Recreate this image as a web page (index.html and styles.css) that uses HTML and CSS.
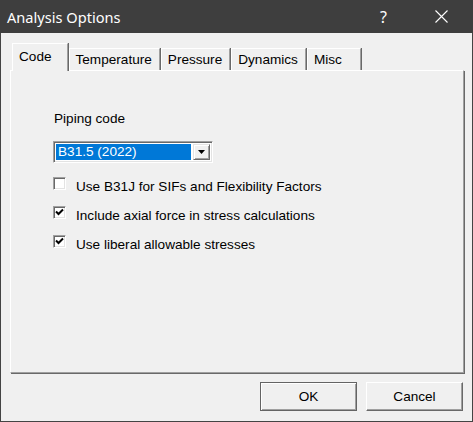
FILE: index.html
```html
<!DOCTYPE html>
<html lang="en">
<head>
  <meta charset="UTF-8" />
  <title>Analysis Options</title>
  <link rel="stylesheet" href="styles.css">
</head>
<body>
  <div class="dialog">
    <div class="titlebar">
      <span class="title">Analysis Options</span>
      <span class="help">?</span>
      <span class="close">
        <svg width="13" height="13" viewBox="0 0 13 13"><path d="M0.5 0.5 L12.5 12.5 M12.5 0.5 L0.5 12.5" stroke="#fff" stroke-width="1.1" fill="none"/></svg>
      </span>
    </div>

    <div class="client">
      <div class="tabs">
        <div class="tab active">Code</div>
        <div class="tab">Temperature</div>
        <div class="tab">Pressure</div>
        <div class="tab">Dynamics</div>
        <div class="tab tab-last">Misc</div>
      </div>

      <div class="panel">
        <div class="field-label">Piping code</div>
        <div class="combo">
          <div class="combo-value"><span class="combo-sel">B31.5 (2022)</span></div>
          <div class="combo-btn">
            <svg width="7" height="4" viewBox="0 0 7 4"><path d="M0 0 H7 L3.5 4 Z" fill="#000"/></svg>
          </div>
        </div>

        <div class="check">
          <span class="box"></span>
          <span class="check-text">Use B31J for SIFs and Flexibility Factors</span>
        </div>
        <div class="check">
          <span class="box"><svg width="9" height="9" viewBox="0 0 9 9"><path d="M1 3.5 L3.5 6 L8 1.5" stroke="#000" stroke-width="2" fill="none"/></svg></span>
          <span class="check-text">Include axial force in stress calculations</span>
        </div>
        <div class="check">
          <span class="box"><svg width="9" height="9" viewBox="0 0 9 9"><path d="M1 3.5 L3.5 6 L8 1.5" stroke="#000" stroke-width="2" fill="none"/></svg></span>
          <span class="check-text">Use liberal allowable stresses</span>
        </div>
      </div>

      <div class="buttons">
        <button class="btn btn-default">OK</button>
        <button class="btn">Cancel</button>
      </div>
    </div>
  </div>
</body>
</html>
```

FILE: styles.css
```css
body {
  margin: 0;
  background: #f0f0f0;
  font-family: "Liberation Sans", Arial, sans-serif;
  font-size: 13.6px;
  color: #000;
}
.dialog {
  width: 473px;
  height: 422px;
  box-sizing: border-box;
  background: #f0f0f0;
  border: 1px solid #444;
  border-top: none;
}
.titlebar {
  height: 33px;
  margin: 0 -1px;
  background: #3e3e3e;
  color: #fff;
  display: flex;
  align-items: center;
  padding-left: 7px;
  font-family: "Noto Sans", "Open Sans", sans-serif;
  font-size: 14.6px;
}
.title {
  flex: 1;
}
.help {
  width: 20px;
  margin-right: 35px;
  font-size: 16px;
}
.close {
  width: 13px;
  margin-right: 25px;
  display: flex;
}
.client {
  padding: 10px 8px 0 9px;
}
.tabs {
  display: flex;
  align-items: flex-end;
  height: 27px;
  padding-left: 2px;
}
.tab {
  height: 22px;
  box-sizing: border-box;
  padding: 3px 7px 0 6px;
  border-left: 1px solid #fff;
  border-top: 1px solid #fff;
  border-right: 1px solid #a0a0a0;
  box-shadow: 1px 0 0 #696969;
  margin-right: 1px;
  white-space: nowrap;
}
.tab.active {
  height: 28px;
  margin-bottom: -1px;
  padding: 5px 15px 0 6px;
  background: #f0f0f0;
  position: relative;
  z-index: 1;
}
.tab-last {
  padding-right: 18px;
}
.panel {
  height: 303px;
  box-sizing: border-box;
  padding: 40px 0 0 43px;
  border-top: 1px solid #fff;
  border-left: 1px solid #fff;
  border-right: 1px solid #a0a0a0;
  border-bottom: 1px solid #a0a0a0;
  box-shadow: 1px 1px 0 #696969;
}
.field-label {
  line-height: 16px;
}
.combo {
  display: flex;
  width: 160px;
  height: 22px;
  box-sizing: border-box;
  margin: 14px 0 7px -1px;
  border-top: 1px solid #a0a0a0;
  border-left: 1px solid #a0a0a0;
  border-right: 1px solid #fff;
  border-bottom: 1px solid #fff;
  box-shadow: inset 1px 1px 0 #696969, inset -1px -1px 0 #e3e3e3;
  background: #fff;
  padding: 2px;
}
.combo-value {
  flex: 1;
  display: flex;
}
.combo-sel {
  flex: 1;
  background: #0078d7;
  color: #fff;
  line-height: 16px;
  padding-left: 2px;
}
.combo-btn {
  width: 17px;
  margin-left: 2px;
  background: #f0f0f0;
  box-sizing: border-box;
  border-top: 1px solid #e3e3e3;
  border-left: 1px solid #e3e3e3;
  border-right: 1px solid #696969;
  border-bottom: 1px solid #696969;
  box-shadow: inset 1px 1px 0 #fff, inset -1px -1px 0 #a0a0a0;
  display: flex;
  align-items: center;
  justify-content: center;
}
.check {
  display: flex;
  align-items: flex-start;
  height: 29px;
  padding-top: 7px;
  box-sizing: border-box;
  margin-left: -1px;
}
.box {
  width: 13px;
  height: 13px;
  box-sizing: border-box;
  background: #fff;
  border-top: 1px solid #a0a0a0;
  border-left: 1px solid #a0a0a0;
  border-right: 1px solid #fff;
  border-bottom: 1px solid #fff;
  box-shadow: inset 1px 1px 0 #696969, inset -1px -1px 0 #e3e3e3;
  display: flex;
  align-items: center;
  justify-content: center;
}
.check-text {
  margin-left: 10px;
  line-height: 16px;
  margin-top: 2px;
}
.buttons {
  display: flex;
  justify-content: flex-end;
  gap: 9px;
  margin-top: 9px;
  padding-right: 1px;
}
.btn {
  width: 97px;
  height: 29px;
  font-family: "Liberation Sans", Arial, sans-serif;
  font-size: 13.6px;
  color: #000;
  background: #f0f0f0;
  border-top: 1px solid #fff;
  border-left: 1px solid #fff;
  border-right: 1px solid #696969;
  border-bottom: 1px solid #696969;
  box-shadow: inset -1px -1px 0 #a0a0a0;
  padding: 0;
}
.btn-default {
  border: 1px solid #646464;
  box-shadow: inset 1px 1px 0 #fff, inset -1px -1px 0 #a0a0a0;
}
```
